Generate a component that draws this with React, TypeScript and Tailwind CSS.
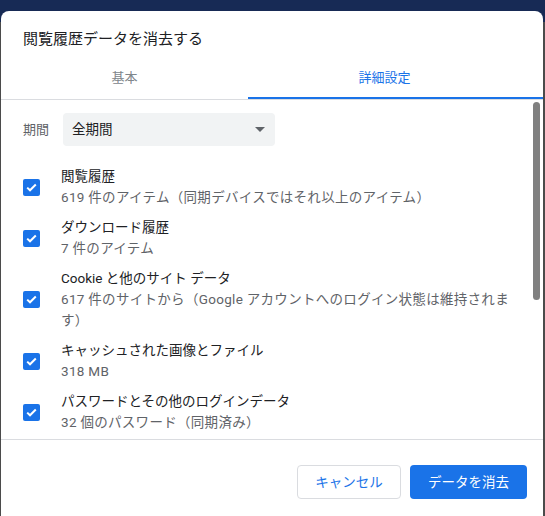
import React from 'react';

const items = [
  { title: '閲覧履歴', sub: ['619 件のアイテム（同期デバイスではそれ以上のアイテム）'] },
  { title: 'ダウンロード履歴', sub: ['7 件のアイテム'] },
  { title: 'Cookie と他のサイト データ', sub: ['617 件のサイトから（Google アカウントへのログイン状態は維持されま', 'す）'] },
  { title: 'キャッシュされた画像とファイル', sub: ['318 MB'] },
  { title: 'パスワードとその他のログインデータ', sub: ['32 個のパスワード（同期済み）'] },
];

const CheckBox = () => (
  <div className="w-[17px] h-[17px] rounded-[2px] bg-[#1a73e8] flex items-center justify-center shrink-0">
    <svg width="11" height="9" viewBox="0 0 11 9" fill="none">
      <path d="M1.2 4.6 L4 7.3 L9.8 1.5" stroke="white" strokeWidth="2" />
    </svg>
  </div>
);

export default function App() {
  return (
    <div
      className="w-[545px] h-[516px] overflow-hidden bg-[linear-gradient(to_bottom,#172a55_22px,#4b4b4b_22px)] flex flex-col"
      style={{ fontFamily: 'Roboto, "Noto Sans CJK JP", sans-serif' }}
    >
      <div className="h-[11px] shrink-0" />
      <div className="flex-1 ml-[1px] w-[542px] bg-white rounded-t-[8px] flex flex-col">
        {/* Title */}
        <div className="h-[49px] pt-[18px] pl-[22px] text-[15px] leading-[20px] text-[#202124]">
          閲覧履歴データを消去する
        </div>

        {/* Tabs */}
        <div className="flex h-[40px] border-b border-[#dadce0]">
          <div className="w-[247px] flex items-center justify-center pb-[3px] text-[13px] text-[#80868b]">
            基本
          </div>
          <div className="flex-1 flex items-center justify-center pb-[1px] pr-[22px] text-[13px] text-[#1a73e8] border-b-2 border-[#1a73e8]">
            詳細設定
          </div>
        </div>

        {/* Content */}
        <div className="flex h-[339px] overflow-hidden">
          <div className="flex-1 pl-[22px] pt-[13px]">
            <div className="flex items-center">
              <span className="text-[13px] text-[#5f6368] w-[40px]">期間</span>
              <div className="w-[212px] h-[33px] rounded-[4px] bg-[#f1f3f4] flex items-center justify-between pl-[9px] pr-[10px]">
                <span className="text-[13.5px] text-[#202124]">全期間</span>
                <svg width="10" height="5" viewBox="0 0 10 5">
                  <path d="M0 0 L10 0 L5 5 Z" fill="#5f6368" />
                </svg>
              </div>
            </div>

            <div className="mt-[20px] flex flex-col gap-[9px]">
              {items.map(item => (
                <div key={item.title} className="flex items-center">
                  <CheckBox />
                  <div className="ml-[21px] w-[450px]">
                    <div className="text-[13.5px] leading-[21px] text-[#202124]">{item.title}</div>
                    {item.sub.map(line => (
                      <div key={line} className="text-[13.5px] leading-[21px] tracking-[0.3px] text-[#5f6368] whitespace-nowrap">
                        {line}
                      </div>
                    ))}
                  </div>
                </div>
              ))}
            </div>
          </div>
          <div className="w-[10px] pt-[2px] shrink-0">
            <div className="w-[7px] h-[198px] rounded-full bg-[#808080]" />
          </div>
        </div>

        {/* Footer */}
        <div className="flex-1 border-t border-[#dadce0] flex justify-end items-start pt-[25px] pr-[16px] gap-[9px]">
          <button className="w-[104px] h-[34px] rounded-[4px] border border-[#dadce0] bg-white text-[13.5px] text-[#1a73e8]">
            キャンセル
          </button>
          <button className="w-[117px] h-[34px] rounded-[4px] bg-[#1a73e8] text-[13.5px] text-white">
            データを消去
          </button>
        </div>
      </div>
    </div>
  );
}
